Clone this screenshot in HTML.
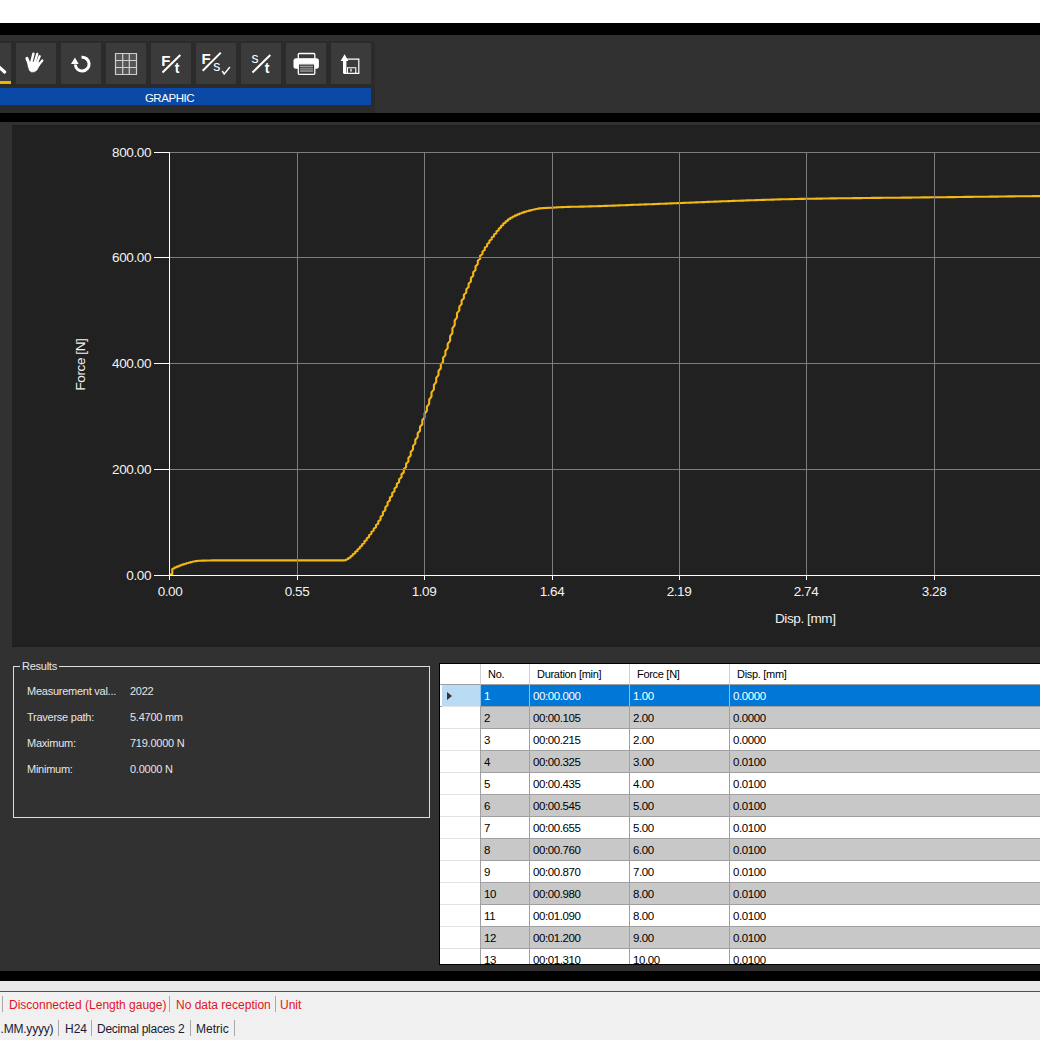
<!DOCTYPE html>
<html><head><meta charset="utf-8">
<style>
html,body{margin:0;padding:0;}
body{width:1040px;height:1040px;overflow:hidden;position:relative;background:#fff;font-family:"Liberation Sans",sans-serif;}
.abs{position:absolute;}
#blk1{left:0;top:23px;width:1040px;height:12px;background:#000;}
#tb{left:0;top:35px;width:1040px;height:78px;background:#313131;}
#grpbg{position:absolute;left:0;top:6px;width:375px;height:72px;background:#2b2b2b;}
.btn{position:absolute;top:8px;width:40px;height:41px;background:#3b3b3b;}
#blue{position:absolute;left:-29px;top:53px;width:400px;height:17px;background:#0a49a6;color:#fff;font-size:11.5px;letter-spacing:-0.45px;text-align:center;line-height:20px;text-indent:-3px;overflow:hidden;}
#blk2{left:0;top:113px;width:1040px;height:9px;background:#000;}
#main{left:0;top:122px;width:1040px;height:849px;background:#313131;}
#chart{left:12px;top:125px;width:1028px;height:519px;background:#212121;border-top:1px solid #1c1c1c;border-bottom:2px solid #1e1e1e;}
#blk3{left:0;top:971px;width:1040px;height:10px;background:#000;}
#sb1{left:0;top:981px;width:1040px;height:10px;background:#e8e8e8;border-bottom:1px solid #505050;}
#sb2{left:0;top:992px;width:1040px;height:48px;background:#f0f0f0;}
.lab{position:absolute;font-size:13.5px;letter-spacing:-0.4px;color:#f2f2f2;line-height:15px;white-space:nowrap;margin-top:1px;}
.ylab{text-align:right;width:60px;left:91px;}
.xlab{text-align:center;width:60px;}
#grp{left:13px;top:666px;width:415px;height:150px;border:1px solid #dcdcdc;}
.gt{position:absolute;font-size:11px;color:#e6e6e6;white-space:nowrap;line-height:13px;letter-spacing:-0.25px;}
#tbl{left:439px;top:663px;width:601px;height:302px;background:#000;overflow:hidden;}
#tin{position:absolute;left:1px;top:1px;width:600px;height:300px;background:#fff;overflow:hidden;}
.th{position:absolute;top:0;height:20px;border-bottom:1px solid #a0a0a0;background:#fff;}
.th span{position:absolute;left:7px;top:4px;font-size:11px;line-height:13px;color:#000;white-space:nowrap;letter-spacing:-0.3px;}
.tr{position:absolute;left:0;width:600px;height:21px;border-bottom:1px solid #a0a0a0;}
.tr .c{position:absolute;top:0;height:21px;font-size:11.5px;letter-spacing:-0.4px;line-height:22px;padding-left:3px;box-sizing:border-box;white-space:nowrap;border-left:1px solid #a0a0a0;color:#000;}
.rh{position:absolute;left:0;top:0;width:40px;height:22px;background:#fff;border-bottom:1px solid #e3e3e3;box-sizing:border-box;}
.tr{border-bottom-color:#a0a0a0;}
.c1{left:40px;width:49px;}
.c2{left:89px;width:100px;}
.c3{left:189px;width:100px;}
.c4{left:289px;width:320px;}
.alt .c{background:#c8c8c8;}
.wht .c{background:#fff;}
.sel .c{background:#0078d7;color:#fff;border-left-color:#8cc0ea;}
.sel .rh{background:#b9dbf4;left:2px;width:38px;}
.arr{position:absolute;left:5px;top:7px;width:0;height:0;border-top:4.7px solid transparent;border-bottom:4.7px solid transparent;border-left:5.5px solid #3a3232;}
.st{position:absolute;font-size:12px;line-height:14px;white-space:nowrap;margin-top:1px;}
.red{color:#e0141e;}
.dk{color:#1a1a30;}
.sep{position:absolute;width:1px;background:#a8a8a8;}
</style></head><body>
<div class="abs" id="blk1"></div>
<div class="abs" id="tb">
  <div id="grpbg"></div>
  <div class="btn" style="left:-29px;"><div style="position:absolute;left:0;top:38px;width:40px;height:3px;background:#f0b400;"></div></div>
  <div class="btn" style="left:16px;"></div>
  <div class="btn" style="left:61px;"></div>
  <div class="btn" style="left:106px;"></div>
  <div class="btn" style="left:151px;"></div>
  <div class="btn" style="left:196px;"></div>
  <div class="btn" style="left:241px;"></div>
  <div class="btn" style="left:286px;"></div>
  <div class="btn" style="left:331px;"></div>
  <div id="blue">GRAPHIC</div>
</div>
<svg class="abs" style="left:0;top:0" width="1040" height="120" viewBox="0 0 1040 120">
  <!-- magnifier handle -->
  <line x1="-1" y1="67" x2="4.6" y2="72" stroke="#fff" stroke-width="3.2" stroke-linecap="round"/>
  <!-- hand -->
  <g fill="#fff" stroke="#fff" stroke-linecap="round">
    <line x1="26.9" y1="58.4" x2="29.8" y2="65.5" stroke-width="3"/>
    <line x1="33.4" y1="53.8" x2="31.3" y2="62.5" stroke-width="2.5"/>
    <line x1="37.2" y1="54" x2="34.7" y2="62.5" stroke-width="2.4"/>
    <line x1="39.7" y1="56.3" x2="36.6" y2="63.5" stroke-width="2.3"/>
    <line x1="42.3" y1="60.5" x2="37.5" y2="66.5" stroke-width="2.3"/>
    <path d="M28.2,62 L38.7,62 L39.2,65.5 L37,70 L34.5,71.8 L31.5,72 L29.5,70.5 L28,66 Z" stroke-width="0.6" stroke-linejoin="round"/>
  </g>
  <!-- refresh -->
  <path d="M81.5,57.2 A6.9,6.9 0 1 1 75.3,64.5" fill="none" stroke="#fff" stroke-width="3"/>
  <path d="M74.9,57.5 L71,63.9 L78.7,63.9 Z" fill="#fff"/>
  <!-- grid icon -->
  <g>
    <rect x="115" y="53" width="22" height="22" fill="#565656"/>
    <path d="M115.5,53.5 H136.5 V74.5 H115.5 Z M122.7,53.5 V74.5 M129.3,53.5 V74.5 M115.5,60.5 H136.5 M115.5,67.5 H136.5" fill="none" stroke="#cfcfcf" stroke-width="1.2"/>
  </g>
  <!-- F/t -->
  <g fill="#fff" font-family="Liberation Sans" font-weight="bold">
    <text x="161.3" y="65.6" font-size="15">F</text>
    <text x="174.8" y="72.8" font-size="14">t</text>
    <line x1="162.5" y1="72.5" x2="180.3" y2="55" stroke="#fff" stroke-width="2"/>
    <text x="201.6" y="63.7" font-size="15">F</text>
    <text x="213.2" y="70.9" font-size="14" font-weight="normal">s</text>
    <line x1="202.7" y1="70.7" x2="220.8" y2="52.6" stroke="#fff" stroke-width="2"/>
    <path d="M222.2,71 L224.2,74 L229.9,67" fill="none" stroke="#fff" stroke-width="1.4"/>
    <text x="251.6" y="63.2" font-size="14" font-weight="normal">s</text>
    <text x="264.8" y="72.8" font-size="14">t</text>
    <line x1="252.5" y1="72.5" x2="270.3" y2="55" stroke="#fff" stroke-width="2"/>
  </g>
  <!-- printer -->
  <g>
    <rect x="298.3" y="53.5" width="16.5" height="6" fill="none" stroke="#fff" stroke-width="1.3" rx="1"/>
    <rect x="293.5" y="58.3" width="25.4" height="10.5" fill="#fff" rx="2.5"/>
    <rect x="298.3" y="63.8" width="16.5" height="10.5" fill="#3b3b3b" stroke="#fff" stroke-width="1.3" rx="1"/>
    <path d="M300,66.5 H313 M300,68.8 H313 M300,71 H313" stroke="#9a9a9a" stroke-width="1.3"/>
  </g>
  <!-- export -->
  <g>
    <path d="M344.3,59.2 H358.8 V73.3 H344.3 Z" fill="none" stroke="#fff" stroke-width="1.2"/>
    <path d="M347.5,73.3 V67.8 H355.8 V73.3" fill="none" stroke="#fff" stroke-width="1.1"/>
    <rect x="350.3" y="68.8" width="1.3" height="2.8" fill="#fff"/>
    <rect x="342" y="58" width="5" height="2" fill="#3b3b3b"/>
    <rect x="343" y="60.5" width="3.4" height="12.8" fill="#fff"/>
    <path d="M340.6,61 L348.4,61 L344.6,54.3 Z" fill="#fff"/>
  </g>
</svg>
<div class="abs" id="blk2"></div>
<div class="abs" id="main"></div>
<div class="abs" id="chart"></div>
<svg class="abs" style="left:0;top:0" width="1040" height="650" viewBox="0 0 1040 650">
  <path d="M170.0,575.0 L170.0,574.6 L172.3,574.0 L172.3,569.1 L174.6,568.3 L174.6,567.5 L176.9,567.1 L176.9,566.6 L179.3,566.2 L179.3,565.6 L181.6,565.2 L181.6,564.7 L183.9,564.4 L183.9,564.0 L186.2,563.7 L186.2,563.3 L188.5,563.0 L188.5,562.7 L190.8,562.4 L190.8,562.0 L193.1,561.8 L193.1,561.5 L195.5,561.3 L195.5,561.1 L197.8,561.0 L197.8,560.8 L200.1,560.7 L200.1,560.7 L202.4,560.6 L202.4,560.6 L204.7,560.6 L204.7,560.6 L207.0,560.5 L207.0,560.5 L209.3,560.5 L209.3,560.5 L211.7,560.5 L211.7,560.4 L214.0,560.4 L214.0,560.4 L216.3,560.4 L216.3,560.4 L218.6,560.4 L218.6,560.4 L220.9,560.4 L220.9,560.4 L223.2,560.4 L223.2,560.4 L225.5,560.4 L225.5,560.4 L227.9,560.4 L227.9,560.4 L230.2,560.4 L230.2,560.4 L232.5,560.4 L232.5,560.4 L234.8,560.4 L234.8,560.4 L237.1,560.4 L237.1,560.4 L239.4,560.4 L239.4,560.4 L241.8,560.4 L241.8,560.4 L244.1,560.4 L244.1,560.4 L246.4,560.4 L246.4,560.4 L248.7,560.4 L248.7,560.4 L251.0,560.4 L251.0,560.4 L253.3,560.4 L253.3,560.4 L255.6,560.4 L255.6,560.4 L258.0,560.4 L258.0,560.4 L260.3,560.4 L260.3,560.4 L262.6,560.4 L262.6,560.4 L264.9,560.4 L264.9,560.4 L267.2,560.4 L267.2,560.4 L269.5,560.4 L269.5,560.4 L271.8,560.4 L271.8,560.4 L274.2,560.4 L274.2,560.4 L276.5,560.4 L276.5,560.4 L278.8,560.4 L278.8,560.4 L281.1,560.4 L281.1,560.4 L283.4,560.4 L283.4,560.4 L285.7,560.4 L285.7,560.4 L288.0,560.4 L288.0,560.4 L290.4,560.4 L290.4,560.4 L292.7,560.4 L292.7,560.4 L295.0,560.4 L295.0,560.4 L297.3,560.4 L297.3,560.4 L299.6,560.4 L299.6,560.4 L301.9,560.4 L301.9,560.4 L304.2,560.4 L304.2,560.4 L306.6,560.4 L306.6,560.4 L308.9,560.4 L308.9,560.4 L311.2,560.4 L311.2,560.4 L313.5,560.4 L313.5,560.4 L315.8,560.4 L315.8,560.4 L318.1,560.4 L318.1,560.4 L320.4,560.4 L320.4,560.4 L322.8,560.4 L322.8,560.4 L325.1,560.4 L325.1,560.4 L327.4,560.4 L327.4,560.4 L329.7,560.4 L329.7,560.4 L332.0,560.4 L332.0,560.4 L334.3,560.4 L334.3,560.4 L336.6,560.4 L336.6,560.4 L339.0,560.4 L339.0,560.4 L341.3,560.4 L341.3,560.4 L343.6,560.4 L343.6,560.4 L345.9,560.3 L345.9,559.7 L348.2,559.1 L348.2,558.2 L350.5,557.6 L350.5,556.4 L352.8,555.6 L352.8,554.2 L355.2,553.3 L355.2,551.8 L357.5,550.9 L357.5,549.4 L359.8,548.4 L359.8,546.9 L362.1,545.8 L362.1,544.2 L364.4,543.1 L364.4,541.3 L366.7,540.1 L366.7,538.3 L369.1,537.0 L369.1,535.1 L371.4,533.8 L371.4,531.9 L373.7,530.6 L373.7,528.6 L376.0,527.3 L376.0,525.2 L378.3,523.7 L378.3,521.3 L380.6,519.6 L380.6,516.9 L382.9,515.0 L382.9,512.1 L385.3,510.2 L385.3,507.2 L387.6,505.2 L387.6,502.3 L389.9,500.4 L389.9,497.6 L392.2,495.8 L392.2,493.1 L394.5,491.2 L394.5,488.5 L396.8,486.7 L396.8,483.9 L399.1,482.1 L399.1,479.3 L401.5,477.3 L401.5,474.4 L403.8,472.4 L403.8,469.3 L406.1,467.1 L406.1,463.8 L408.4,461.5 L408.4,458.0 L410.7,455.6 L410.7,452.0 L413.0,449.6 L413.0,445.9 L415.3,443.4 L415.3,439.7 L417.7,437.1 L417.7,433.3 L420.0,430.7 L420.0,426.8 L422.3,424.2 L422.3,420.2 L424.6,417.5 L424.6,413.5 L426.9,410.8 L426.9,406.6 L429.2,403.8 L429.2,399.5 L431.5,396.6 L431.5,392.3 L433.9,389.4 L433.9,385.0 L436.2,382.2 L436.2,377.9 L438.5,375.1 L438.5,371.0 L440.8,368.3 L440.8,364.4 L443.1,361.7 L443.1,357.7 L445.4,355.1 L445.4,351.0 L447.7,348.2 L447.7,343.9 L450.1,340.9 L450.1,336.2 L452.4,333.1 L452.4,328.3 L454.7,325.1 L454.7,320.5 L457.0,317.4 L457.0,313.1 L459.3,310.4 L459.3,306.6 L461.6,304.1 L461.6,300.5 L463.9,298.2 L463.9,294.8 L466.3,292.6 L466.3,289.2 L468.6,287.0 L468.6,283.7 L470.9,281.5 L470.9,278.1 L473.2,275.7 L473.2,272.2 L475.5,269.9 L475.5,266.4 L477.8,264.1 L477.8,260.8 L480.1,258.7 L480.1,255.8 L482.5,254.0 L482.5,251.5 L484.8,249.9 L484.8,247.6 L487.1,246.2 L487.1,244.1 L489.4,242.7 L489.4,240.7 L491.7,239.3 L491.7,237.4 L494.0,236.2 L494.0,234.4 L496.4,233.2 L496.4,231.4 L498.7,230.3 L498.7,228.6 L501.0,227.5 L501.0,226.0 L503.3,225.0 L503.3,223.6 L505.6,222.8 L505.6,221.5 L507.9,220.7 L507.9,219.6 L510.2,218.9 L510.2,218.0 L512.6,217.5 L512.6,216.7 L514.9,216.2 L514.9,215.5 L517.2,215.1 L517.2,214.5 L519.5,214.1 L519.5,213.5 L521.8,213.2 L521.8,212.7 L524.1,212.4 L524.1,211.9 L526.4,211.6 L526.4,211.2 L528.8,211.0 L528.8,210.6 L531.1,210.4 L531.1,210.0 L533.4,209.8 L533.4,209.5 L535.7,209.3 L535.7,209.0 L538.0,208.8 L538.0,208.6 L540.3,208.4 L540.3,208.2 L542.6,208.2 L542.6,208.1 L545.0,208.0 L545.0,208.0 L547.3,207.9 L547.3,207.9 L549.6,207.8 L549.6,207.8 L551.9,207.8 L551.9,207.7 L554.2,207.6 L554.2,207.5 L556.5,207.5 L556.5,207.4 L558.8,207.3 L558.8,207.2 L561.2,207.2 L561.2,207.1 L563.5,207.1 L563.5,207.0 L565.8,207.0 L565.8,207.0 L568.1,206.9 L568.1,206.9 L570.4,206.9 L570.4,206.8 L572.7,206.8 L572.7,206.8 L575.0,206.8 L575.0,206.7 L577.4,206.7 L577.4,206.7 L579.7,206.7 L579.7,206.6 L582.0,206.6 L582.0,206.6 L584.3,206.6 L584.3,206.5 L586.6,206.5 L586.6,206.5 L588.9,206.5 L588.9,206.4 L591.2,206.4 L591.2,206.4 L593.6,206.3 L593.6,206.3 L595.9,206.3 L595.9,206.2 L598.2,206.2 L598.2,206.1 L600.5,206.1 L600.5,206.1 L602.8,206.0 L602.8,206.0 L605.1,205.9 L605.1,205.9 L607.4,205.9 L607.4,205.8 L609.8,205.8 L609.8,205.7 L612.1,205.7 L612.1,205.6 L614.4,205.6 L614.4,205.6 L616.7,205.5 L616.7,205.5 L619.0,205.4 L619.0,205.4 L621.3,205.3 L621.3,205.3 L623.7,205.2 L623.7,205.2 L626.0,205.2 L626.0,205.1 L628.3,205.1 L628.3,205.0 L630.6,205.0 L630.6,204.9 L632.9,204.9 L632.9,204.8 L635.2,204.8 L635.2,204.7 L637.5,204.7 L637.5,204.7 L639.9,204.6 L639.9,204.6 L642.2,204.5 L642.2,204.5 L644.5,204.5 L644.5,204.4 L646.8,204.4 L646.8,204.3 L649.1,204.3 L649.1,204.2 L651.4,204.2 L651.4,204.2 L653.7,204.1 L653.7,204.1 L656.1,204.0 L656.1,204.0 L658.4,203.9 L658.4,203.9 L660.7,203.8 L660.7,203.8 L663.0,203.8 L663.0,203.7 L665.3,203.7 L665.3,203.6 L667.6,203.6 L667.6,203.5 L669.9,203.5 L669.9,203.4 L672.3,203.4 L672.3,203.3 L674.6,203.3 L674.6,203.2 L676.9,203.2 L676.9,203.1 L679.2,203.1 L679.2,203.1 L681.5,203.0 L681.5,203.0 L683.8,202.9 L683.8,202.9 L686.1,202.8 L686.1,202.8 L688.5,202.7 L688.5,202.7 L690.8,202.6 L690.8,202.6 L693.1,202.5 L693.1,202.5 L695.4,202.5 L695.4,202.4 L697.7,202.4 L697.7,202.3 L700.0,202.3 L700.0,202.2 L702.3,202.2 L702.3,202.1 L704.7,202.1 L704.7,202.0 L707.0,202.0 L707.0,201.9 L709.3,201.9 L709.3,201.8 L711.6,201.8 L711.6,201.7 L713.9,201.7 L713.9,201.6 L716.2,201.6 L716.2,201.6 L718.5,201.5 L718.5,201.5 L720.9,201.4 L720.9,201.4 L723.2,201.3 L723.2,201.3 L725.5,201.2 L725.5,201.2 L727.8,201.2 L727.8,201.1 L730.1,201.1 L730.1,201.0 L732.4,201.0 L732.4,200.9 L734.7,200.9 L734.7,200.8 L737.1,200.8 L737.1,200.8 L739.4,200.7 L739.4,200.7 L741.7,200.6 L741.7,200.6 L744.0,200.6 L744.0,200.5 L746.3,200.5 L746.3,200.4 L748.6,200.4 L748.6,200.3 L751.0,200.3 L751.0,200.3 L753.3,200.2 L753.3,200.2 L755.6,200.2 L755.6,200.1 L757.9,200.1 L757.9,200.0 L760.2,200.0 L760.2,200.0 L762.5,199.9 L762.5,199.9 L764.8,199.9 L764.8,199.8 L767.2,199.8 L767.2,199.7 L769.5,199.7 L769.5,199.7 L771.8,199.6 L771.8,199.6 L774.1,199.6 L774.1,199.5 L776.4,199.5 L776.4,199.5 L778.7,199.4 L778.7,199.4 L781.0,199.4 L781.0,199.3 L783.4,199.3 L783.4,199.3 L785.7,199.3 L785.7,199.2 L788.0,199.2 L788.0,199.2 L790.3,199.1 L790.3,199.1 L792.6,199.1 L792.6,199.1 L794.9,199.0 L794.9,199.0 L797.2,199.0 L797.2,199.0 L799.6,198.9 L799.6,198.9 L801.9,198.9 L801.9,198.9 L804.2,198.9 L804.2,198.8 L806.5,198.8 L806.5,198.8 L808.8,198.8 L808.8,198.7 L811.1,198.7 L811.1,198.7 L813.4,198.7 L813.4,198.7 L815.8,198.7 L815.8,198.6 L818.1,198.6 L818.1,198.6 L820.4,198.6 L820.4,198.6 L822.7,198.6 L822.7,198.5 L825.0,198.5 L825.0,198.5 L827.3,198.5 L827.3,198.5 L829.6,198.5 L829.6,198.4 L832.0,198.4 L832.0,198.4 L834.3,198.4 L834.3,198.4 L836.6,198.4 L836.6,198.3 L838.9,198.3 L838.9,198.3 L841.2,198.3 L841.2,198.3 L843.5,198.3 L843.5,198.3 L845.8,198.2 L845.8,198.2 L848.2,198.2 L848.2,198.2 L850.5,198.2 L850.5,198.2 L852.8,198.2 L852.8,198.1 L855.1,198.1 L855.1,198.1 L857.4,198.1 L857.4,198.1 L859.7,198.1 L859.7,198.1 L862.0,198.1 L862.0,198.0 L864.4,198.0 L864.4,198.0 L866.7,198.0 L866.7,198.0 L869.0,198.0 L869.0,198.0 L871.3,198.0 L871.3,197.9 L873.6,197.9 L873.6,197.9 L875.9,197.9 L875.9,197.9 L878.3,197.9 L878.3,197.9 L880.6,197.9 L880.6,197.9 L882.9,197.8 L882.9,197.8 L885.2,197.8 L885.2,197.8 L887.5,197.8 L887.5,197.8 L889.8,197.8 L889.8,197.8 L892.1,197.8 L892.1,197.7 L894.5,197.7 L894.5,197.7 L896.8,197.7 L896.8,197.7 L899.1,197.7 L899.1,197.7 L901.4,197.7 L901.4,197.6 L903.7,197.6 L903.7,197.6 L906.0,197.6 L906.0,197.6 L908.3,197.6 L908.3,197.6 L910.7,197.6 L910.7,197.6 L913.0,197.5 L913.0,197.5 L915.3,197.5 L915.3,197.5 L917.6,197.5 L917.6,197.5 L919.9,197.5 L919.9,197.5 L922.2,197.4 L922.2,197.4 L924.5,197.4 L924.5,197.4 L926.9,197.4 L926.9,197.4 L929.2,197.4 L929.2,197.4 L931.5,197.3 L931.5,197.3 L933.8,197.3 L933.8,197.3 L936.1,197.3 L936.1,197.3 L938.4,197.3 L938.4,197.2 L940.7,197.2 L940.7,197.2 L943.1,197.2 L943.1,197.2 L945.4,197.2 L945.4,197.2 L947.7,197.2 L947.7,197.1 L950.0,197.1 L950.0,197.1 L952.3,197.1 L952.3,197.1 L954.6,197.1 L954.6,197.1 L956.9,197.0 L956.9,197.0 L959.3,197.0 L959.3,197.0 L961.6,197.0 L961.6,197.0 L963.9,197.0 L963.9,196.9 L966.2,196.9 L966.2,196.9 L968.5,196.9 L968.5,196.9 L970.8,196.9 L970.8,196.9 L973.1,196.9 L973.1,196.8 L975.5,196.8 L975.5,196.8 L977.8,196.8 L977.8,196.8 L980.1,196.8 L980.1,196.8 L982.4,196.7 L982.4,196.7 L984.7,196.7 L984.7,196.7 L987.0,196.7 L987.0,196.7 L989.3,196.7 L989.3,196.6 L991.7,196.6 L991.7,196.6 L994.0,196.6 L994.0,196.6 L996.3,196.6 L996.3,196.6 L998.6,196.6 L998.6,196.5 L1000.9,196.5 L1000.9,196.5 L1003.2,196.5 L1003.2,196.5 L1005.6,196.5 L1005.6,196.5 L1007.9,196.4 L1007.9,196.4 L1010.2,196.4 L1010.2,196.4 L1012.5,196.4 L1012.5,196.4 L1014.8,196.4 L1014.8,196.3 L1017.1,196.3 L1017.1,196.3 L1019.4,196.3 L1019.4,196.3 L1021.8,196.3 L1021.8,196.3 L1024.1,196.3 L1024.1,196.2 L1026.4,196.2 L1026.4,196.2 L1028.7,196.2 L1028.7,196.2 L1031.0,196.2 L1031.0,196.2 L1033.3,196.1 L1033.3,196.1 L1035.6,196.1 L1035.6,196.1 L1038.0,196.1 L1038.0,196.1 L1040.3,196.1 L1040.3,196.0 L1042.6,196.0 L1042.6,196.0 L1044.9,196.0 L1044.9,196.0" fill="none" stroke="#f4b814" stroke-width="2.1" stroke-linejoin="round"/>
  <g stroke="#7d7d7d" stroke-width="1" fill="none">
    <path d="M170,152.5 H1040 M170,257.5 H1040 M170,363.5 H1040 M170,469.5 H1040"/>
    <path d="M297.5,152 V575 M424.5,152 V575 M552.5,152 V575 M679.5,152 V575 M806.5,152 V575 M934.5,152 V575"/>
  </g>
  <g stroke="#fff" stroke-width="1" fill="none">
    <path d="M169.5,152 V580 M154,575.5 H1040"/>
    <path d="M154,152.5 H170 M154,257.5 H170 M154,363.5 H170 M154,469.5 H170"/>
    <path d="M297.5,575 V580 M424.5,575 V580 M552.5,575 V580 M679.5,575 V580 M806.5,575 V580 M934.5,575 V580"/>
  </g>
</svg>
<div class="lab ylab" style="top:144px">800.00</div>
<div class="lab ylab" style="top:249px">600.00</div>
<div class="lab ylab" style="top:355px">400.00</div>
<div class="lab ylab" style="top:461px">200.00</div>
<div class="lab ylab" style="top:567px">0.00</div>
<div class="lab xlab" style="left:140px;top:583px">0.00</div>
<div class="lab xlab" style="left:267px;top:583px">0.55</div>
<div class="lab xlab" style="left:394px;top:583px">1.09</div>
<div class="lab xlab" style="left:522px;top:583px">1.64</div>
<div class="lab xlab" style="left:649px;top:583px">2.19</div>
<div class="lab xlab" style="left:776px;top:583px">2.74</div>
<div class="lab xlab" style="left:904px;top:583px">3.28</div>
<div class="lab" style="left:775px;top:610px">Disp. [mm]</div>
<div class="lab" style="left:54px;top:356px;transform:rotate(-90deg);transform-origin:26px 7.5px;">Force [N]</div>

<div class="abs" id="grp"></div>
<div class="gt" style="left:20px;top:660px;background:#313131;padding:0 2px;">Results</div>
<div class="gt" style="left:27px;top:685px">Measurement val...</div>
<div class="gt" style="left:130px;top:685px">2022</div>
<div class="gt" style="left:27px;top:711px">Traverse path:</div>
<div class="gt" style="left:130px;top:711px">5.4700 mm</div>
<div class="gt" style="left:27px;top:737px">Maximum:</div>
<div class="gt" style="left:130px;top:737px">719.0000 N</div>
<div class="gt" style="left:27px;top:763px">Minimum:</div>
<div class="gt" style="left:130px;top:763px">0.0000 N</div>

<div class="abs" id="tbl"><div id="tin">
  <div class="th" style="left:0;width:40px;"></div>
  <div class="th" style="left:40px;width:49px;border-left:1px solid #d0d0d0"><span>No.</span></div>
  <div class="th" style="left:89px;width:100px;border-left:1px solid #d0d0d0"><span>Duration [min]</span></div>
  <div class="th" style="left:189px;width:100px;border-left:1px solid #d0d0d0"><span>Force [N]</span></div>
  <div class="th" style="left:289px;width:320px;border-left:1px solid #d0d0d0"><span>Disp. [mm]</span></div>
<div class="tr sel" style="top:21px"><div class="rh"><i class=arr></i></div><div class="c c1">1</div><div class="c c2">00:00.000</div><div class="c c3">1.00</div><div class="c c4">0.0000</div></div>
<div class="tr alt" style="top:43px"><div class="rh"></div><div class="c c1">2</div><div class="c c2">00:00.105</div><div class="c c3">2.00</div><div class="c c4">0.0000</div></div>
<div class="tr wht" style="top:65px"><div class="rh"></div><div class="c c1">3</div><div class="c c2">00:00.215</div><div class="c c3">2.00</div><div class="c c4">0.0000</div></div>
<div class="tr alt" style="top:87px"><div class="rh"></div><div class="c c1">4</div><div class="c c2">00:00.325</div><div class="c c3">3.00</div><div class="c c4">0.0100</div></div>
<div class="tr wht" style="top:109px"><div class="rh"></div><div class="c c1">5</div><div class="c c2">00:00.435</div><div class="c c3">4.00</div><div class="c c4">0.0100</div></div>
<div class="tr alt" style="top:131px"><div class="rh"></div><div class="c c1">6</div><div class="c c2">00:00.545</div><div class="c c3">5.00</div><div class="c c4">0.0100</div></div>
<div class="tr wht" style="top:153px"><div class="rh"></div><div class="c c1">7</div><div class="c c2">00:00.655</div><div class="c c3">5.00</div><div class="c c4">0.0100</div></div>
<div class="tr alt" style="top:175px"><div class="rh"></div><div class="c c1">8</div><div class="c c2">00:00.760</div><div class="c c3">6.00</div><div class="c c4">0.0100</div></div>
<div class="tr wht" style="top:197px"><div class="rh"></div><div class="c c1">9</div><div class="c c2">00:00.870</div><div class="c c3">7.00</div><div class="c c4">0.0100</div></div>
<div class="tr alt" style="top:219px"><div class="rh"></div><div class="c c1">10</div><div class="c c2">00:00.980</div><div class="c c3">8.00</div><div class="c c4">0.0100</div></div>
<div class="tr wht" style="top:241px"><div class="rh"></div><div class="c c1">11</div><div class="c c2">00:01.090</div><div class="c c3">8.00</div><div class="c c4">0.0100</div></div>
<div class="tr alt" style="top:263px"><div class="rh"></div><div class="c c1">12</div><div class="c c2">00:01.200</div><div class="c c3">9.00</div><div class="c c4">0.0100</div></div>
<div class="tr wht" style="top:285px"><div class="rh"></div><div class="c c1">13</div><div class="c c2">00:01.310</div><div class="c c3">10.00</div><div class="c c4">0.0100</div></div>
</div></div>

<div class="abs" id="blk3"></div>
<div class="abs" id="sb1"></div>
<div class="abs" id="sb2">
  <div class="sep" style="left:2px;top:4px;height:16px"></div>
  <div class="st red" style="left:9px;top:5px">Disconnected (Length gauge)</div>
  <div class="sep" style="left:169px;top:4px;height:16px"></div>
  <div class="st red" style="left:176px;top:5px">No data reception</div>
  <div class="sep" style="left:275px;top:4px;height:16px"></div>
  <div class="st red" style="left:280px;top:5px">Unit</div>
  <div class="st dk" style="left:0.5px;top:29px;letter-spacing:-0.2px">.MM.yyyy)</div>
  <div class="sep" style="left:58px;top:28px;height:16px"></div>
  <div class="st dk" style="left:65px;top:29px">H24</div>
  <div class="sep" style="left:91px;top:28px;height:16px"></div>
  <div class="st dk" style="left:97px;top:29px;letter-spacing:-0.25px">Decimal places 2</div>
  <div class="sep" style="left:190px;top:28px;height:16px"></div>
  <div class="st dk" style="left:196px;top:29px">Metric</div>
  <div class="sep" style="left:234px;top:28px;height:16px"></div>
</div>
</body></html>
